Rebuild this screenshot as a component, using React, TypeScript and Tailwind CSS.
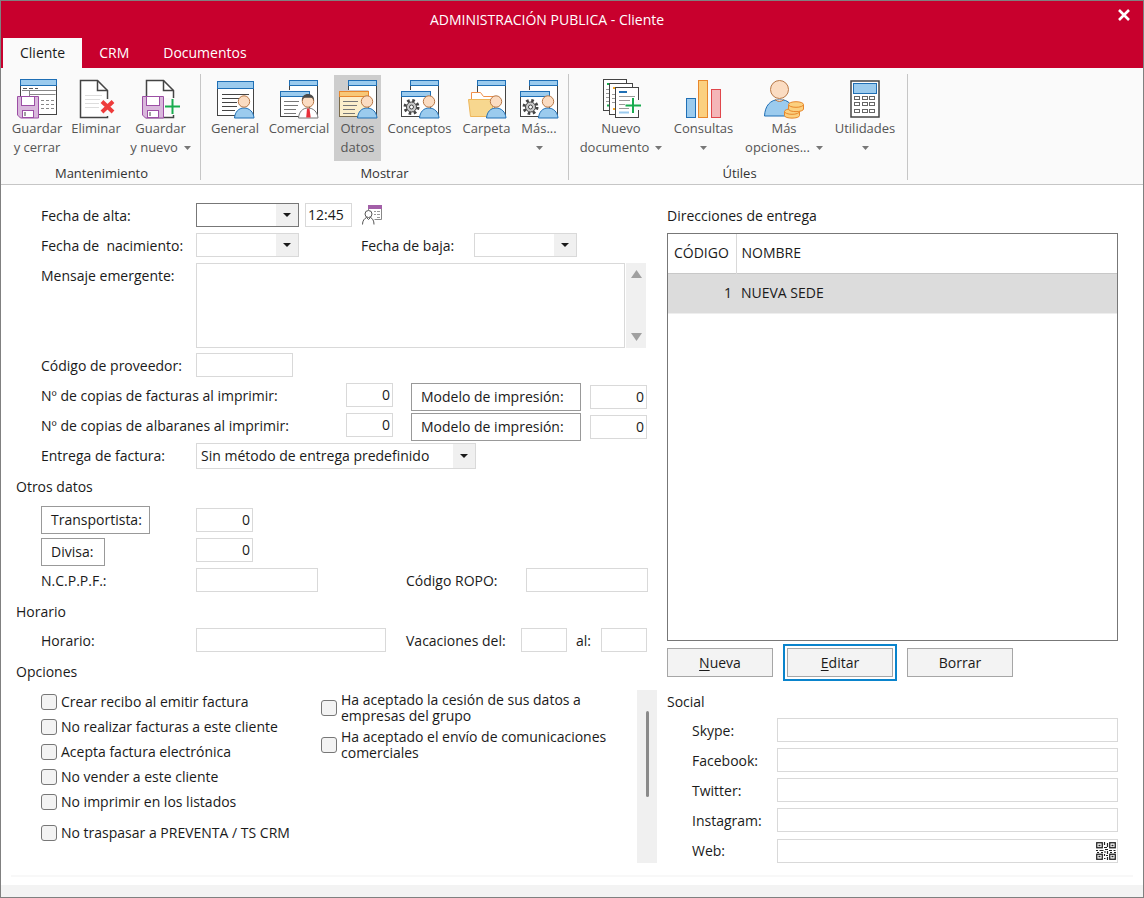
import { useState } from 'react';
import type { ReactNode } from 'react';

const INK = '#444444';
const BLUE = '#1f6fb5';
const SKY = '#9bcbee';

function Person({ tie = false }: { tie?: boolean }) {
  return (
    <>
      <path
        d="M19.5 40c.5-6 4-10 9.500-10s9.500 4 10 10z"
        fill={tie ? '#ffffff' : SKY}
        stroke={tie ? '#777777' : BLUE}
        strokeWidth="1"
      />
      {tie && <path d="M28 30.500h2.500l1.200 9h-4.500z" fill="#e8303a" />}
      <circle cx="29" cy="23.500" r="5.700" fill="#fbdcc2" stroke="#b87847" />
      {tie && <path d="M22.800 23c0-5 2.500-7 6.200-7s6.200 2 6.200 7l-2-3.200h-8.400z" fill="#4a4a4a" />}
    </>
  );
}

function BackWindow() {
  return (
    <>
      <rect x="10.500" y="2.500" width="28" height="34" fill="#fff" stroke={INK} />
      <rect x="10.500" y="2.500" width="28" height="5" fill={SKY} stroke={BLUE} />
    </>
  );
}

function FrontWindow({ warm = false }: { warm?: boolean }) {
  return (
    <>
      <rect x="-.5" y="12" width="31" height="28" fill={warm ? '#cdcdcd' : '#fafafa'} />
      <rect x="1.500" y="13.500" width="29" height="25" fill={warm ? '#fbeecb' : '#fff'} stroke={warm ? '#7a6a4a' : INK} />
      <rect x="1.500" y="13.500" width="29" height="5" fill={warm ? '#f8c877' : SKY} stroke={warm ? '#e8872b' : BLUE} />
    </>
  );
}

function TextLines() {
  return <path d="M5 23.500h15M5 27.500h14M5 31.500h12M5 35.500h12" stroke="#777" fill="none" />;
}

function Gear() {
  return (
    <>
      <circle cx="11.500" cy="29" r="6.500" fill="none" stroke={INK} strokeWidth="3" strokeDasharray="2.550 2.550" />
      <circle cx="11.500" cy="29" r="5" fill="#c9c9c9" stroke={INK} />
      <circle cx="11.500" cy="29" r="2" fill="#fff" stroke={INK} />
    </>
  );
}

function Floppy() {
  return (
    <>
      <path d="M.5 18.500h21V40H3.500l-3-3z" fill="#d9b8dc" stroke="#9c4fa5" />
      <rect x="4.500" y="18.500" width="13" height="9" fill="#fff" stroke="#9c4fa5" />
      <rect x="5.500" y="32.500" width="11" height="7" fill="#fff" stroke="#9c4fa5" />
      <path d="M8 34v4" stroke={INK} />
    </>
  );
}

const DOC_PATH = 'M31.500 39.500h-27v-37h17l10 10z';
const FOLD_PATH = 'M21.500 2.500v10h10';

const icons: Record<string, ReactNode> = {
  saveClose: (
    <>
      <rect x="3.500" y="1.500" width="36" height="35" fill="#fff" stroke={INK} />
      <rect x="3.500" y="1.500" width="36" height="6" fill={SKY} stroke={BLUE} />
      <path d="M5 12.500h34M12.500 12.500v6M12.500 16.500h26" stroke="#888" />
      <path d="M6 10.500h15" stroke="#555" strokeDasharray="4 2" />
      <path d="M24 22.500h13M24 26.500h13M24 30.500h13" stroke="#888" strokeDasharray="3 2" />
      <Floppy />
    </>
  ),
  remove: (
    <>
      <path d={DOC_PATH} fill="#fff" stroke={INK} strokeWidth="1.500" />
      <path d={FOLD_PATH} fill="none" stroke={INK} strokeWidth="1.500" />
      <path d="M9 17.500h17M9 21.500h16M9 25.500h14M9 29.500h14" stroke="#ddd" />
      <rect x="24" y="21" width="10" height="17" fill="#fafafa" />
      <path d="M26 23.500l11 10.500M37 23.500L26 34" stroke="#ee3b3b" strokeWidth="4" />
    </>
  ),
  saveNew: (
    <>
      <g transform="translate(1 0)">
        <path d={DOC_PATH} fill="#fff" stroke={INK} strokeWidth="1.500" />
        <path d={FOLD_PATH} fill="none" stroke={INK} strokeWidth="1.500" />
      </g>
      <rect x="23.500" y="20" width="12" height="17" fill="#fafafa" />
      <g transform="translate(1 0)">
        <Floppy />
      </g>
      <path d="M24 28.500h15M31.500 21v15" stroke="#18ab4e" strokeWidth="2" />
    </>
  ),
  general: (
    <>
      <rect x="2.500" y="3.500" width="36" height="34" fill="#fff" stroke={INK} />
      <rect x="2.500" y="3.500" width="36" height="7" fill={SKY} stroke={BLUE} />
      <path d="M7 16.500h27M7 20.500h17M7 24.500h15M7 28.500h15M7 32.500h13" stroke={INK} />
      <Person />
    </>
  ),
  commercial: (
    <>
      <BackWindow />
      <FrontWindow />
      <TextLines />
      <Person tie />
    </>
  ),
  otherData: (
    <>
      <BackWindow />
      <FrontWindow warm />
      <TextLines />
      <Person />
    </>
  ),
  concepts: (
    <>
      <BackWindow />
      <FrontWindow />
      <Gear />
      <Person />
    </>
  ),
  folder: (
    <>
      <BackWindow />
      <path d="M4.500 33V14.500h9l3 4h11V33" fill="#fff" stroke="#f0904a" />
      <path d="M1.500 21.500h24v17h-22z" fill="#f7d78f" stroke="#eeb65a" />
      <Person />
    </>
  ),
  newDocument: (
    <>
      <rect x="2.500" y="1.500" width="23" height="31" fill="#fff" stroke={INK} />
      <path d="M6 6h4M6 27.500h4" stroke="#18ab4e" strokeWidth="2" />
      <path d="M5 11.500h4M5 15.500h4M5 19.500h4M5 23.500h4" stroke="#999" />
      <rect x="8.500" y="5.500" width="23" height="31" fill="#fff" stroke={INK} />
      <path d="M12 10h3M12 31h2" stroke="#f5a623" strokeWidth="2" />
      <path d="M11 16.500h3M11 20.500h3M11 24.500h3" stroke="#999" />
      <rect x="14.500" y="9.500" width="23" height="30" fill="#fff" stroke={INK} />
      <path d="M18 14h8" stroke={BLUE} strokeWidth="2" />
      <path d="M18 18.500h16M18 22.500h11M18 26.500h6M18 30.500h10" stroke="#999" />
      <path d="M18 34.500h10" stroke={SKY} strokeWidth="2" />
      <path d="M36 22v10" stroke="#fafafa" strokeWidth="5" />
      <path d="M24.500 27.500h15.500M32 20v15" stroke="#18ab4e" strokeWidth="2" />
    </>
  ),
  queries: (
    <>
      <rect x="2.500" y="20.500" width="9" height="19" fill={SKY} stroke={BLUE} />
      <rect x="14.500" y="2.500" width="9" height="37" fill="#fbd07f" stroke="#e8872b" />
      <rect x="27.500" y="11.500" width="9" height="28" fill="#f4b6b8" stroke="#e0474c" />
    </>
  ),
  moreOptions: (
    <>
      <path d="M.5 38C1 28 6 21.500 15.500 21.500S29 27 30 38z" fill={SKY} stroke={BLUE} />
      <path d="M11 21.500q4.500 4 9 0" fill="#fbdcc2" stroke="#b87847" />
      <circle cx="15.500" cy="11.500" r="9" fill="#fbdcc2" stroke="#b87847" />
      <g fill="#fbd07f" stroke="#e8872b">
        <path d="M20.500 33.500v4c0 3.500 15 3.500 15 0v-4z" />
        <ellipse cx="28" cy="33.500" rx="7.500" ry="2.800" />
        <path d="M24.500 27v4c0 3.500 15 3.500 15 0v-4z" />
        <ellipse cx="32" cy="26.500" rx="7.500" ry="2.800" />
      </g>
    </>
  ),
  utilities: (
    <>
      <rect x="6" y="3" width="28" height="36" fill="#fff" stroke={INK} strokeWidth="1.500" />
      <rect x="8.500" y="5.500" width="23" height="10" fill={SKY} stroke={BLUE} />
      <g fill="#fff" stroke="#666">
        {[18.5, 24.5, 31.5].map((y) =>
          [9.5, 17.5, 24.5].map((x) => <rect key={`${x}-${y}`} x={x} y={y} width="5" height="3" />),
        )}
      </g>
    </>
  ),
};

interface RibbonItem {
  icon: string;
  lines: string[];
  width: string;
  menu?: boolean;
  active?: boolean;
}

interface RibbonGroupData {
  title: string;
  className: string;
  items: RibbonItem[];
}

const ribbon: RibbonGroupData[] = [
  {
    title: 'Mantenimiento',
    className: 'pl-[7px] pr-[5px]',
    items: [
      { icon: 'saveClose', lines: ['Guardar', 'y cerrar'], width: 'w-[58px]' },
      { icon: 'remove', lines: ['Eliminar'], width: 'w-[60px]' },
      { icon: 'saveNew', lines: ['Guardar', 'y nuevo'], width: 'w-[69px]', menu: true },
    ],
  },
  {
    title: 'Mostrar',
    className: 'px-[5px]',
    items: [
      { icon: 'general', lines: ['General'], width: 'w-[58px]' },
      { icon: 'commercial', lines: ['Comercial'], width: 'w-[70px]' },
      { icon: 'otherData', lines: ['Otros', 'datos'], width: 'w-[47px]', active: true },
      { icon: 'concepts', lines: ['Conceptos'], width: 'w-[77px]' },
      { icon: 'folder', lines: ['Carpeta'], width: 'w-[57px]' },
      { icon: 'concepts', lines: ['Más...', ''], width: 'w-[48px]', menu: true },
    ],
  },
  {
    title: 'Útiles',
    className: 'pl-[7px] pr-[4px]',
    items: [
      { icon: 'newDocument', lines: ['Nuevo', 'documento'], width: 'w-[90px]', menu: true },
      { icon: 'queries', lines: ['Consultas', ''], width: 'w-[75px]', menu: true },
      { icon: 'moreOptions', lines: ['Más', 'opciones...'], width: 'w-[86px]', menu: true },
      { icon: 'utilities', lines: ['Utilidades', ''], width: 'w-[76px]', menu: true },
    ],
  },
];

function Caret({ className }: { className: string }) {
  return (
    <svg viewBox="0 0 8 4" preserveAspectRatio="none" className={className} aria-hidden="true">
      <path d="M0 0h8L4 4z" fill="currentColor" />
    </svg>
  );
}

function RibbonButton({ item }: { item: RibbonItem }) {
  return (
    <button
      type="button"
      className={`flex h-[86px] shrink-0 flex-col items-center pt-[3px] whitespace-nowrap text-[#555] ${item.width} ${item.active ? 'bg-[#cdcdcd]' : 'hover:bg-[#e8e8e8]'}`}
    >
      <svg viewBox="0 0 40 40" className="h-10 w-10 shrink-0 overflow-visible" fill="none" aria-hidden="true">
        {icons[item.icon]}
      </svg>
      <span className="pt-px leading-[19px]">{item.lines[0]}</span>
      {item.lines.length > 1 && (
        <span className="flex h-[19px] items-center gap-1.5 leading-[19px]">
          {item.lines[1]}
          {item.menu && <Caret className="h-[4px] w-[7px] text-[#777]" />}
        </span>
      )}
    </button>
  );
}

function Field({ label, value, className }: { label: string; value?: string; className: string }) {
  return (
    <input
      type="text"
      aria-label={label}
      defaultValue={value}
      className={`h-6 shrink-0 border border-[#d9d9d9] bg-white px-0.5 pb-0.5 outline-none focus:border-[#777] ${className}`}
    />
  );
}

function Combo({ id, options, className, boxClassName }: { id: string; options: string[]; className: string; boxClassName: string }) {
  return (
    <div className={`relative shrink-0 ${className}`}>
      <select id={id} className={`h-full w-full appearance-none border bg-white pl-1 outline-none ${boxClassName}`}>
        {options.map((option) => (
          <option key={option}>{option}</option>
        ))}
      </select>
      <span className="pointer-events-none absolute inset-y-px right-px flex w-[22px] items-center justify-center bg-[#f0f0f0]">
        <Caret className="h-[4px] w-[8px]" />
      </span>
    </div>
  );
}

function Row({ children, className = 'h-[30px]' }: { children: ReactNode; className?: string }) {
  return <div className={`flex shrink-0 items-start pt-[3px] ${className}`}>{children}</div>;
}

function Label({ htmlFor, className, children }: { htmlFor?: string; className: string; children: ReactNode }) {
  return (
    <label htmlFor={htmlFor} className={`shrink-0 leading-[26px] whitespace-nowrap ${className}`}>
      {children}
    </label>
  );
}

function LinkButton({ children, className }: { children: ReactNode; className: string }) {
  return (
    <button type="button" className={`h-7 shrink-0 border border-[#999] bg-white pl-[9px] text-left whitespace-nowrap hover:bg-gray-50 ${className}`}>
      {children}
    </button>
  );
}

function Check({ label, className }: { label: string; className: string }) {
  return (
    <label className={`flex items-center gap-1 ${className}`}>
      <input
        type="checkbox"
        className="h-4 w-4 shrink-0 appearance-none rounded-[3px] border border-[#777] bg-[#f3f3f3] checked:bg-[#1f6fb5]"
      />
      <span>{label}</span>
    </label>
  );
}

const checks = [
  'Crear recibo al emitir factura',
  'No realizar facturas a este cliente',
  'Acepta factura electrónica',
  'No vender a este cliente',
  'No imprimir en los listados',
];

const consents = [
  'Ha aceptado la cesión de sus datos a empresas del grupo',
  'Ha aceptado el envío de comunicaciones comerciales',
];

const networks = ['Skype', 'Facebook', 'Twitter', 'Instagram'];
const tabs = ['Cliente', 'CRM', 'Documentos'];

function ClientForm() {
  return (
    <div className="flex w-[641px] shrink-0 flex-col">
      <div className="flex flex-col pr-[10px] pl-[25px]">
        <Row>
          <Label htmlFor="alta" className="w-[155px]">Fecha de alta:</Label>
          <Combo id="alta" options={['']} className="h-6 w-[103px]" boxClassName="border-[#777]" />
          <Field label="Hora de alta" value="12:45" className="ml-[6px] w-[47px]" />
          <button type="button" aria-label="Ficha" className="ml-[9px] h-6 w-[22px]">
            <svg viewBox="0 0 22 22" className="h-[22px] w-[22px]" fill="none" aria-hidden="true">
              <path d="M7.500 6V1.500h13v14h-7" fill="#fff" stroke="#888" />
              <path d="M7 3h14" stroke="#a35fa8" strokeWidth="4" />
              <path d="M13 7.500h2M16 7.500h3M13 10.500h2M16 10.500h3M16 13.500h3" stroke="#999" />
              <circle cx="7.500" cy="10" r="3.500" fill="#fff" stroke="#555" />
              <path d="M1.500 20.500c0-4 2-6 4-7M9.500 13.500c2 1 3.500 3 3.500 7M5.500 13.500l2 2 2-2" stroke="#555" />
            </svg>
          </button>
        </Row>
        <Row>
          <Label htmlFor="nacimiento" className="w-[155px]">Fecha de&nbsp; nacimiento:</Label>
          <Combo id="nacimiento" options={['']} className="h-6 w-[103px]" boxClassName="border-[#d9d9d9]" />
          <Label htmlFor="baja" className="ml-[62px] w-[113px]">Fecha de baja:</Label>
          <Combo id="baja" options={['']} className="h-6 w-[103px]" boxClassName="border-[#d9d9d9]" />
        </Row>
        <Row className="h-[90px]">
          <Label htmlFor="mensaje" className="w-[155px]">Mensaje emergente:</Label>
          <textarea id="mensaje" className="h-[85px] w-[429px] resize-none border border-[#d9d9d9] p-1 outline-none" />
          <div className="ml-px flex h-[85px] w-5 flex-col items-center justify-between bg-[#f0f0f0] py-[7px] text-[#a0a0a0]">
            <Caret className="h-[8px] w-[11px] rotate-180" />
            <Caret className="h-[8px] w-[11px]" />
          </div>
        </Row>
        <Row>
          <Label className="w-[155px]">Código de proveedor:</Label>
          <Field label="Código de proveedor" className="w-[97px]" />
        </Row>
        {['facturas', 'albaranes'].map((kind) => (
          <Row key={kind}>
            <Label className="w-[305px]">Nº de copias de {kind} al imprimir:</Label>
            <Field label={`Copias de ${kind}`} value="0" className="w-[47px] text-right" />
            <LinkButton className="ml-[18px] w-[170px]">Modelo de impresión:</LinkButton>
            <Field label={`Modelo de impresión de ${kind}`} value="0" className="mt-0.5 ml-[9px] w-[57px] text-right" />
          </Row>
        ))}
        <Row>
          <Label htmlFor="entrega" className="w-[155px]">Entrega de factura:</Label>
          <Combo
            id="entrega"
            options={['Sin método de entrega predefinido']}
            className="h-[26px] w-[280px]"
            boxClassName="border-[#d9d9d9]"
          />
        </Row>
      </div>

      <h2 className="h-[33px] leading-[34px]">Otros datos</h2>
      <div className="flex flex-col pl-[25px]">
        <Row className="h-[32px]">
          <div className="w-[155px]">
            <LinkButton className="w-[109px]">Transportista:</LinkButton>
          </div>
          <Field label="Transportista" value="0" className="mt-0.5 w-[57px] text-right" />
        </Row>
        <Row>
          <div className="w-[155px]">
            <LinkButton className="w-[64px]">Divisa:</LinkButton>
          </div>
          <Field label="Divisa" value="0" className="w-[57px] text-right" />
        </Row>
        <Row>
          <Label className="w-[155px]">N.C.P.P.F.:</Label>
          <Field label="N.C.P.P.F." className="w-[122px]" />
          <Label className="ml-[88px] w-[120px]">Código ROPO:</Label>
          <Field label="Código ROPO" className="w-[122px]" />
        </Row>
      </div>

      <h2 className="h-[30px] leading-[34px]">Horario</h2>
      <div className="pl-[25px]">
        <Row>
          <Label className="w-[155px]">Horario:</Label>
          <Field label="Horario" className="w-[190px]" />
          <Label className="ml-[20px] w-[115px]">Vacaciones del:</Label>
          <Field label="Vacaciones del" className="w-[46px]" />
          <Label className="ml-[9px] w-[25px]">al:</Label>
          <Field label="Vacaciones al" className="w-[46px]" />
        </Row>
      </div>

      <h2 className="h-[30px] leading-[34px]">Opciones</h2>
      <div className="mt-1 flex grow">
        <div className="flex w-[305px] shrink-0 flex-col pl-[25px]">
          {checks.map((label) => (
            <Check key={label} label={label} className="h-[25px]" />
          ))}
          <Check label="No traspasar a PREVENTA / TS CRM" className="mt-1.5 h-[25px]" />
        </div>
        <div className="flex grow flex-col">
          {consents.map((label) => (
            <Check key={label} label={label} className="h-[37px] w-[300px] leading-4" />
          ))}
        </div>
        <div className="mt-px flex w-5 justify-center bg-[#f0f0f0] pt-[21px]">
          <div className="h-[86px] w-[3px] rounded-full bg-[#8a8a8a]" />
        </div>
      </div>
    </div>
  );
}

function QrIcon() {
  return (
    <svg viewBox="0 0 20 18" className="h-[18px] w-5" fill="none" stroke="#222" aria-hidden="true">
      <rect x=".75" y=".75" width="5.500" height="5" strokeWidth="1.300" />
      <rect x="13.750" y=".75" width="5.500" height="5" strokeWidth="1.300" />
      <rect x=".75" y="12.250" width="5.500" height="5" strokeWidth="1.300" />
      <rect x="13.750" y="12.250" width="5.500" height="5" strokeWidth="1.300" />
      <path d="M2.500 3.500h2M15.500 3.500h2M2.500 14.500h2M15.500 14.500h2" strokeWidth="1.500" />
      <path d="M8.500 0v3M11.500 1v4M8 5.500h3M0 8.500h2M3.500 8.500h4M1 10.500h2M5 10.500h2M9 7.500h3M8 10h2M11.500 9v3M13 8.500h3M17.500 8.500h2M14 10.500h2M18 10.500h2M8.500 12v2M10 13.500h2M8 16.500h1.500M11.500 15v3" strokeWidth="1.200" />
    </svg>
  );
}

function SidePanel() {
  const button = 'h-[29px] w-[106px] border border-[#a6a6a6] bg-[#f3f3f3] hover:bg-[#e8e8e8]';

  return (
    <div className="flex min-w-0 grow flex-col">
      <h2 className="h-[33px] leading-[32px]">Direcciones de entrega</h2>
      <div className="min-h-[200px] grow border border-[#777] bg-white">
        <table className="w-full border-collapse text-left">
          <thead>
            <tr className="h-[39px] border-b border-[#c8c8c8]">
              <th className="w-[68px] border-r border-[#d9d9d9] pl-1.5 font-normal">CÓDIGO</th>
              <th className="pl-[5px] font-normal">NOMBRE</th>
            </tr>
          </thead>
          <tbody>
            <tr className="h-10 border-b border-[#eee] bg-[#dcdcdc]">
              <td className="pr-1 text-right">1</td>
              <td className="pl-[5px]">NUEVA SEDE</td>
            </tr>
          </tbody>
        </table>
      </div>
      <div className="mt-[7px] flex shrink-0 gap-[14px]">
        <button type="button" className={button}><u className="underline-offset-2">N</u>ueva</button>
        <button type="button" className={`outline-2 outline-offset-2 outline-[#0a84cc] ${button}`}>
          <u className="underline-offset-2">E</u>ditar
        </button>
        <button type="button" className={button}>Borrar</button>
      </div>

      <h2 className="mt-2 h-[30px] leading-[34px]">Social</h2>
      <div className="flex flex-col pl-[25px]">
        {networks.map((name) => (
          <Row key={name}>
            <Label htmlFor={name} className="w-[85px]">{name}:</Label>
            <input id={name} type="text" className="h-6 min-w-0 grow border border-[#d9d9d9] px-1 outline-none" />
          </Row>
        ))}
        <Row className="h-[28px]">
          <Label htmlFor="web" className="w-[85px]">Web:</Label>
          <div className="flex h-6 min-w-0 grow items-center self-end border border-[#d9d9d9]">
            <input id="web" type="text" className="min-w-0 grow px-1 outline-none" />
            <button type="button" aria-label="Código QR" className="pr-px"><QrIcon /></button>
          </div>
        </Row>
      </div>
    </div>
  );
}

export default function App() {
  const [tab, setTab] = useState('Cliente');

  return (
    <div className="flex min-h-screen flex-col border border-[#808080] bg-white font-['Open_Sans','Noto_Sans',sans-serif] text-sm text-[#1a1a1a]">
      <header className="flex shrink-0 flex-col bg-[#c8002d] text-white">
        <div className="flex h-[37px] items-start">
          <h1 className="grow pl-[10px] text-center leading-[37px]">ADMINISTRACIÓN PUBLICA - Cliente</h1>
          <button type="button" aria-label="Cerrar" className="mr-3 flex h-7 w-[48px] items-center justify-end">
            <svg viewBox="0 0 14 14" className="h-[14px] w-[14px]" aria-hidden="true">
              <path d="M2 2l10 10M12 2L2 12" stroke="#fff" strokeWidth="2.600" />
            </svg>
          </button>
        </div>
        <nav className="flex h-[30px] pl-0.5">
          {tabs.map((name) => (
            <button
              key={name}
              type="button"
              onClick={() => setTab(name)}
              className={`px-[17px] leading-[30px] ${tab === name ? 'bg-[#fafafa] text-[#1a1a1a]' : ''}`}
            >
              {name}
            </button>
          ))}
        </nav>
      </header>

      <div className="flex h-[117px] shrink-0 border-b border-[#c6c6c6] bg-[#fafafa] pt-1.5 pb-1 text-[13px]">
        {ribbon.map((group) => (
          <section key={group.title} className={`flex flex-col border-r border-[#c6c6c6] pt-px ${group.className}`}>
            <div className="flex">
              {group.items.map((item) => (
                <RibbonButton key={item.lines.join(' ')} item={item} />
              ))}
            </div>
            <h2 className="text-center leading-[24px] text-[#333]">{group.title}</h2>
          </section>
        ))}
      </div>

      <main className="flex grow gap-[10px] pt-[15px] pr-[25px] pl-[15px]">
        <ClientForm />
        <SidePanel />
      </main>
      <div className="mx-[10px] mt-3 h-0.5 shrink-0 bg-[#f8f8f8]" />
      <footer className="mt-2 h-3 shrink-0 bg-[#f3f3f3]" />
    </div>
  );
}
